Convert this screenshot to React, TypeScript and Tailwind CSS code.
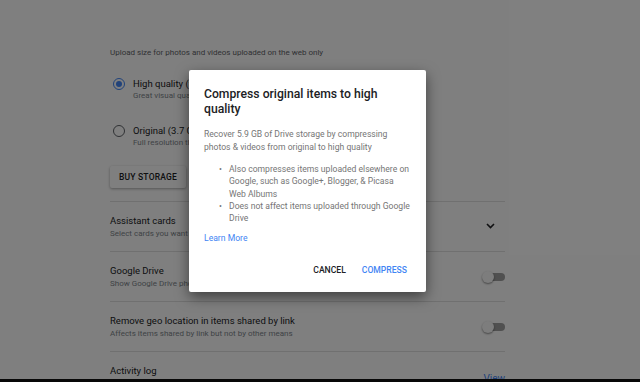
import React from 'react';

const SettingRow = ({ title, sub, right }: { title: string; sub: string; right?: React.ReactNode }) => (
  <div className="flex h-[50px] items-start justify-between border-t border-[#e0e0e0]">
    <div className="pt-[12px] min-w-0">
      <p className="text-[9.5px] leading-[14px] text-[#202124]">{title}</p>
      <p className="text-[8px] leading-[12px] text-[#80868b] whitespace-nowrap">{sub}</p>
    </div>
    {right}
  </div>
);

const Toggle = () => (
  <div className="relative mt-[19px] mr-0 h-[12px] w-[23px]">
    <div className="absolute right-0 top-[2px] h-[8px] w-[20px] rounded-full bg-[#a0a0a0]" />
    <div className="absolute left-0 top-0 h-[12px] w-[12px] rounded-full bg-[#fafafa] shadow-[0_1px_2px_rgba(0,0,0,0.45)]" />
  </div>
);

const Radio = ({ checked }: { checked?: boolean }) => (
  <div
    className={`mt-[1px] flex h-[12px] w-[12px] shrink-0 items-center justify-center rounded-full border-[1.5px] ${
      checked ? 'border-[#4285f4]' : 'border-[#5f6368]'
    }`}
  >
    {checked && <div className="h-[6px] w-[6px] rounded-full bg-[#4285f4]" />}
  </div>
);

const App: React.FC = () => {
  return (
    <div className="relative flex h-[382px] w-[640px] flex-col overflow-hidden bg-white font-['Roboto',sans-serif]">
      {/* Settings page */}
      <div className="flex-1 overflow-hidden pl-[110px] pt-[47px]">
        <div className="w-[395px]">
          <p className="text-[8px] leading-[12px] text-[#5f6368]">Upload size for photos and videos uploaded on the web only</p>

          <div className="mt-[18px] flex gap-[8px] pl-[3px]">
            <Radio checked />
            <div>
              <p className="text-[9.5px] leading-[13px] text-[#202124] whitespace-nowrap">High quality (free unlimited storage)</p>
              <p className="text-[8px] leading-[12px] text-[#80868b] whitespace-nowrap">Great visual quality at reduced file size</p>
            </div>
          </div>

          <div className="mt-[22px] flex gap-[8px] pl-[3px]">
            <Radio />
            <div>
              <p className="text-[9.5px] leading-[13px] text-[#202124] whitespace-nowrap">Original (3.7 GB storage used)</p>
              <p className="text-[8px] leading-[12px] text-[#80868b] whitespace-nowrap">Full resolution that counts against your quota</p>
            </div>
          </div>

          <button className="mt-[17px] flex h-[22px] w-[76px] items-center justify-center rounded-[2px] bg-white text-[8.5px] font-medium tracking-[0.2px] text-[#202124] shadow-[0_1px_3px_rgba(0,0,0,0.35)]">
            BUY STORAGE
          </button>

          <div className="mt-[13px]">
            <SettingRow
              title="Assistant cards"
              sub="Select cards you want to see in the Assistant"
              right={
                <svg className="mr-[10px] mt-[21px]" width="9" height="6" viewBox="0 0 9 6">
                  <path d="M1 1l3.5 3.5L8 1" fill="none" stroke="#202124" strokeWidth="1.6" />
                </svg>
              }
            />
            <SettingRow title="Google Drive" sub="Show Google Drive photos & videos in your Photos library" right={<Toggle />} />
            <SettingRow title="Remove geo location in items shared by link" sub="Affects items shared by link but not by other means" right={<Toggle />} />
            <div className="flex h-[50px] items-start justify-between border-t border-[#e0e0e0]">
              <div className="pt-[12px]">
                <p className="text-[9.5px] leading-[14px] text-[#202124]">Activity log</p>
                <p className="text-[8px] leading-[12px] text-[#80868b]">View your comments and other activity</p>
              </div>
              <span className="mt-[19px] text-[10px] text-[#4285f4]">View</span>
            </div>
          </div>
        </div>
      </div>
      <div className="h-[3px] shrink-0 bg-[#111]" />

      {/* Scrim */}
      <div className="absolute inset-0 bg-black/50" />

      {/* Dialog */}
      <div className="absolute left-[189px] top-[70px] h-[222px] w-[237px] rounded-[2px] bg-white px-[15px] pt-[17px] shadow-[0_5px_14px_rgba(0,0,0,0.5)]">
        <h2 className="text-[12.2px] font-medium leading-[14.5px] text-[#202124]">Compress original items to high quality</h2>
        <p className="mt-[12px] text-[8.6px] leading-[13px] text-[#757575]">
          Recover 5.9 GB of Drive storage by compressing photos &amp; videos from original to high quality
        </p>
        <ul className="mt-[9px] text-[8.6px] leading-[12.3px] text-[#757575]">
          <li className="flex">
            <span className="w-[25px] shrink-0 pl-[15px]">•</span>
            <span>
              Also compresses items uploaded elsewhere on Google, such as Google+, Blogger, &amp; Picasa
              <br />
              Web Albums
            </span>
          </li>
          <li className="flex">
            <span className="w-[25px] shrink-0 pl-[15px]">•</span>
            <span>Does not affect items uploaded through Google Drive</span>
          </li>
        </ul>
        <p className="mt-[8px] text-[8.6px] leading-[12px] text-[#4285f4]">Learn More</p>
        <div className="mt-[20px] flex justify-end gap-[16px] pr-[4px] text-[8.6px] font-medium leading-[12px]">
          <span className="text-[#202124]">CANCEL</span>
          <span className="text-[#4285f4]">COMPRESS</span>
        </div>
      </div>
    </div>
  );
};

export default App;
